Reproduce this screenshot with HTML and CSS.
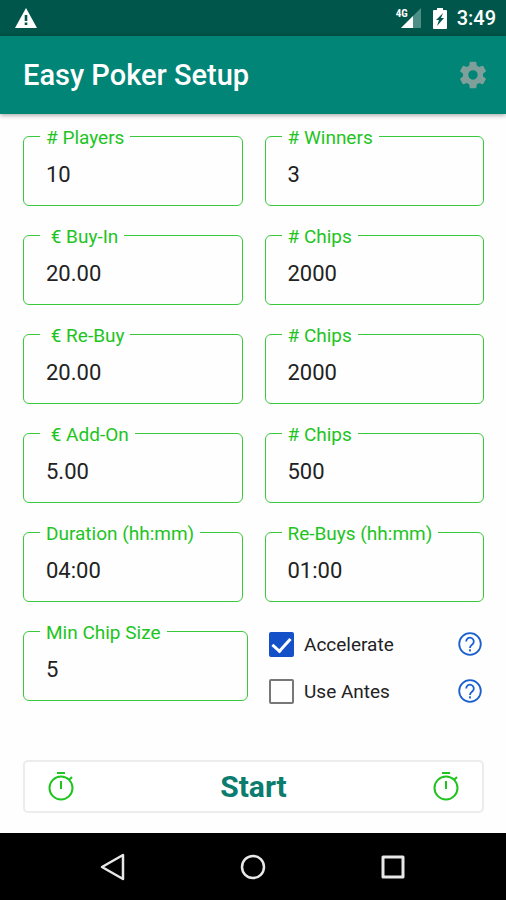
FILE: index.html
```html
<!DOCTYPE html>
<html lang="en">
<head>
  <meta charset="UTF-8">
  <meta name="viewport" content="width=device-width, initial-scale=1.0">
  <title>Easy Poker Setup</title>
  <link rel="stylesheet" href="styles.css">
</head>
<body>
  <div class="status-bar">
    <svg class="warning" width="22" height="20" viewBox="0 0 22 20">
      <path d="M11 0L22 20H0z" fill="#fff"/>
      <path d="M9.700 7h2.600v6H9.700zM9.700 14.500h2.600v2.500H9.700z" fill="#00564a"/>
    </svg>
    <div class="signal">
      <span class="network">4G</span>
      <svg width="21" height="20" viewBox="0 0 21 20">
        <path d="M21 0v20H1z" fill="#4d8f86"/>
        <path d="M13 8v12H1z" fill="#fff"/>
      </svg>
    </div>
    <svg class="battery" width="14" height="21" viewBox="0 0 14 21">
      <path d="M4 0h6v2h3a1 1 0 0 1 1 1v17a1 1 0 0 1-1 1H1a1 1 0 0 1-1-1V3a1 1 0 0 1 1-1h3z" fill="#fff"/>
      <path d="M10 5L3 12h3l-2 6 7-8H8z" fill="#00564a"/>
    </svg>
    <span class="time">3:49</span>
  </div>

  <header class="app-bar">
    <h1>Easy Poker Setup</h1>
    <button class="icon-button" type="button" aria-label="Settings">
      <svg width="32" height="32" viewBox="0 0 24 24" fill="#7f9f9a">
        <path d="M19.430 12.980c.04-.32.07-.64.07-.98s-.03-.66-.07-.98l2.110-1.650c.19-.15.24-.42.12-.64l-2-3.460c-.12-.22-.39-.3-.61-.22l-2.490 1c-.52-.4-1.080-.73-1.690-.98l-.38-2.650C14.460 2.180 14.250 2 14 2h-4c-.25 0-.46.18-.49.42l-.38 2.650c-.61.25-1.170.59-1.690.98l-2.490-1c-.23-.09-.49 0-.61.22l-2 3.460c-.13.22-.07.49.12.64l2.110 1.650c-.04.32-.07.65-.07.98s.03.66.07.98l-2.110 1.650c-.19.15-.24.42-.12.64l2 3.460c.12.22.39.3.61.22l2.490-1c.52.4 1.080.73 1.690.98l.38 2.650c.03.24.24.42.49.42h4c.25 0 .46-.18.49-.42l.38-2.650c.61-.25 1.170-.59 1.690-.98l2.490 1c.23.09.49 0 .61-.22l2-3.460c.12-.22.07-.49-.12-.64l-2.110-1.650zM12 15.500c-1.930 0-3.500-1.570-3.500-3.500s1.570-3.500 3.500-3.500 3.500 1.570 3.500 3.500-1.570 3.500-3.500 3.500z"/>
      </svg>
    </button>
  </header>

  <main class="content">
    <form class="setup">
      <div class="row">
        <fieldset class="field">
          <legend><label for="players"># Players</label></legend>
          <input id="players" type="text" value="10">
        </fieldset>
        <fieldset class="field">
          <legend><label for="winners"># Winners</label></legend>
          <input id="winners" type="text" value="3">
        </fieldset>
      </div>
      <div class="row">
        <fieldset class="field">
          <legend><label for="buy-in">&nbsp;€ Buy-In</label></legend>
          <input id="buy-in" type="text" value="20.00">
        </fieldset>
        <fieldset class="field">
          <legend><label for="buy-in-chips"># Chips</label></legend>
          <input id="buy-in-chips" type="text" value="2000">
        </fieldset>
      </div>
      <div class="row">
        <fieldset class="field">
          <legend><label for="re-buy">&nbsp;€ Re-Buy</label></legend>
          <input id="re-buy" type="text" value="20.00">
        </fieldset>
        <fieldset class="field">
          <legend><label for="re-buy-chips"># Chips</label></legend>
          <input id="re-buy-chips" type="text" value="2000">
        </fieldset>
      </div>
      <div class="row">
        <fieldset class="field">
          <legend><label for="add-on">&nbsp;€ Add-On</label></legend>
          <input id="add-on" type="text" value="5.00">
        </fieldset>
        <fieldset class="field">
          <legend><label for="add-on-chips"># Chips</label></legend>
          <input id="add-on-chips" type="text" value="500">
        </fieldset>
      </div>
      <div class="row">
        <fieldset class="field">
          <legend><label for="duration">Duration (hh:mm)</label></legend>
          <input id="duration" type="text" value="04:00">
        </fieldset>
        <fieldset class="field">
          <legend><label for="re-buys">Re-Buys (hh:mm)</label></legend>
          <input id="re-buys" type="text" value="01:00">
        </fieldset>
      </div>
      <div class="row last-row">
        <fieldset class="field">
          <legend><label for="min-chip">Min Chip Size</label></legend>
          <input id="min-chip" type="text" value="5">
        </fieldset>
        <div class="options">
          <div class="option">
            <input id="accelerate" type="checkbox" checked>
            <label for="accelerate">Accelerate</label>
            <button class="icon-button" type="button" aria-label="About Accelerate">
              <svg width="28" height="28" viewBox="0 0 28 28" fill="none" stroke="#1a5fd0" stroke-width="1.800">
                <circle cx="14" cy="14" r="10.800"/>
                <path d="M10.200 11.500a3.800 3.800 0 1 1 6.300 2.800c-1.500 1.300-2.500 1.700-2.500 3.700M14 19.200v2.200"/>
              </svg>
            </button>
          </div>
          <div class="option">
            <input id="antes" type="checkbox">
            <label for="antes">Use Antes</label>
            <button class="icon-button" type="button" aria-label="About Use Antes">
              <svg width="28" height="28" viewBox="0 0 28 28" fill="none" stroke="#1a5fd0" stroke-width="1.800">
                <circle cx="14" cy="14" r="10.800"/>
                <path d="M10.200 11.500a3.800 3.800 0 1 1 6.300 2.800c-1.500 1.300-2.500 1.700-2.500 3.700M14 19.200v2.200"/>
              </svg>
            </button>
          </div>
        </div>
      </div>
      <button class="start" type="button">
        <svg width="28" height="32" viewBox="0 0 28 32" fill="none" stroke="#1fc41f" stroke-width="2">
          <circle cx="14" cy="17" r="11.500"/>
          <path d="M10 2h8M14 10v8M22 9l3-3"/>
        </svg>
        <span>Start</span>
        <svg width="28" height="32" viewBox="0 0 28 32" fill="none" stroke="#1fc41f" stroke-width="2">
          <circle cx="14" cy="17" r="11.500"/>
          <path d="M10 2h8M14 10v8M22 9l3-3"/>
        </svg>
      </button>
    </form>
  </main>

  <nav class="nav-bar">
    <button class="icon-button" type="button" aria-label="Back">
      <svg width="28" height="28" viewBox="0 0 28 28" fill="none" stroke="#e8e8e8" stroke-width="2.500" stroke-linejoin="round">
        <path d="M24 2v24L3 14z"/>
      </svg>
    </button>
    <button class="icon-button" type="button" aria-label="Home">
      <svg width="28" height="28" viewBox="0 0 28 28" fill="none" stroke="#e8e8e8" stroke-width="2.500">
        <circle cx="14" cy="14" r="11"/>
      </svg>
    </button>
    <button class="icon-button" type="button" aria-label="Recent apps">
      <svg width="28" height="28" viewBox="0 0 28 28" fill="none" stroke="#e8e8e8" stroke-width="3" stroke-linejoin="round">
        <path d="M4 4h20v20H4z"/>
      </svg>
    </button>
  </nav>
</body>
</html>
```

FILE: styles.css
```css
* {
  box-sizing: border-box;
}
body {
  margin: 0;
  min-height: 100vh;
  display: flex;
  flex-direction: column;
  background-color: #fefefe;
  color: #222;
  font-family: Roboto, sans-serif;
}
svg {
  display: block;
}
.icon-button {
  display: block;
  padding: 0;
  border: 0;
  background: none;
}
.status-bar {
  display: flex;
  align-items: center;
  height: 36px;
  padding: 0 10px 0 15px;
  background-color: #00564a;
  color: #fff;
}
.warning {
  margin-right: auto;
}
.signal {
  display: flex;
  align-items: flex-start;
}
.network {
  margin-right: -8px;
  font-family: "Roboto Condensed", Roboto, sans-serif;
  font-size: 11px;
  font-weight: 700;
  line-height: 11px;
}
.battery {
  margin: 0 10px 0 12px;
}
.time {
  font-size: 20px;
  font-weight: 500;
}
.app-bar {
  display: flex;
  align-items: center;
  justify-content: space-between;
  height: 78px;
  padding: 0 17px 0 23px;
  background-color: #008577;
  color: #fff;
  box-shadow: 0 1px 5px rgba(0, 0, 0, 0.4);
}
.app-bar h1 {
  margin: 0;
  font-size: 29px;
  font-weight: 500;
}
.content {
  flex: 1;
  padding: 12px 22px 20px 23px;
}
.setup {
  display: grid;
  gap: 19px;
}
.row {
  display: grid;
  grid-template-columns: 1fr 1fr;
  gap: 22px;
}
.last-row {
  grid-template-columns: 225fr 215fr;
  gap: 21px;
}
.field {
  min-width: 0;
  height: 80px;
  margin: 0;
  padding: 0 16px;
  border: 1px solid #3cc83c;
  border-radius: 6px;
}
.field legend {
  height: 20px;
  padding: 0 6px;
  color: #1fc41f;
  font-size: 19px;
  line-height: 24px;
}
.field input {
  display: block;
  width: 100%;
  height: 56px;
  padding: 0 6px;
  border: 0;
  outline: 0;
  background: none;
  color: #222;
  font-family: inherit;
  font-size: 22px;
}
.options {
  display: grid;
  align-content: start;
  gap: 19px;
  padding-top: 9px;
}
.option {
  display: flex;
  align-items: center;
}
.option input {
  appearance: none;
  width: 25px;
  height: 25px;
  margin: 0 10px 0 0;
  border: 2px solid #777;
  border-radius: 2px;
}
.option input:checked {
  border-color: #1450c8;
  background-color: #1450c8;
}
.option input:checked::before {
  content: "";
  display: block;
  width: 8px;
  height: 15px;
  margin: 0 auto;
  border: solid #fff;
  border-width: 0 3px 3px 0;
  transform: rotate(42deg);
}
.option label {
  flex: 1;
  font-size: 19px;
}
.start {
  display: flex;
  align-items: center;
  justify-content: space-between;
  width: 100%;
  height: 53px;
  margin-top: 36px;
  padding: 0 22px;
  border: 2px solid #ececec;
  border-radius: 5px;
  background-color: #fff;
  color: #0b7c6e;
  font-family: inherit;
  font-size: 30px;
  font-weight: 700;
}
.nav-bar {
  display: flex;
  align-items: center;
  justify-content: center;
  gap: 112px;
  height: 67px;
  background-color: #000;
}
```
